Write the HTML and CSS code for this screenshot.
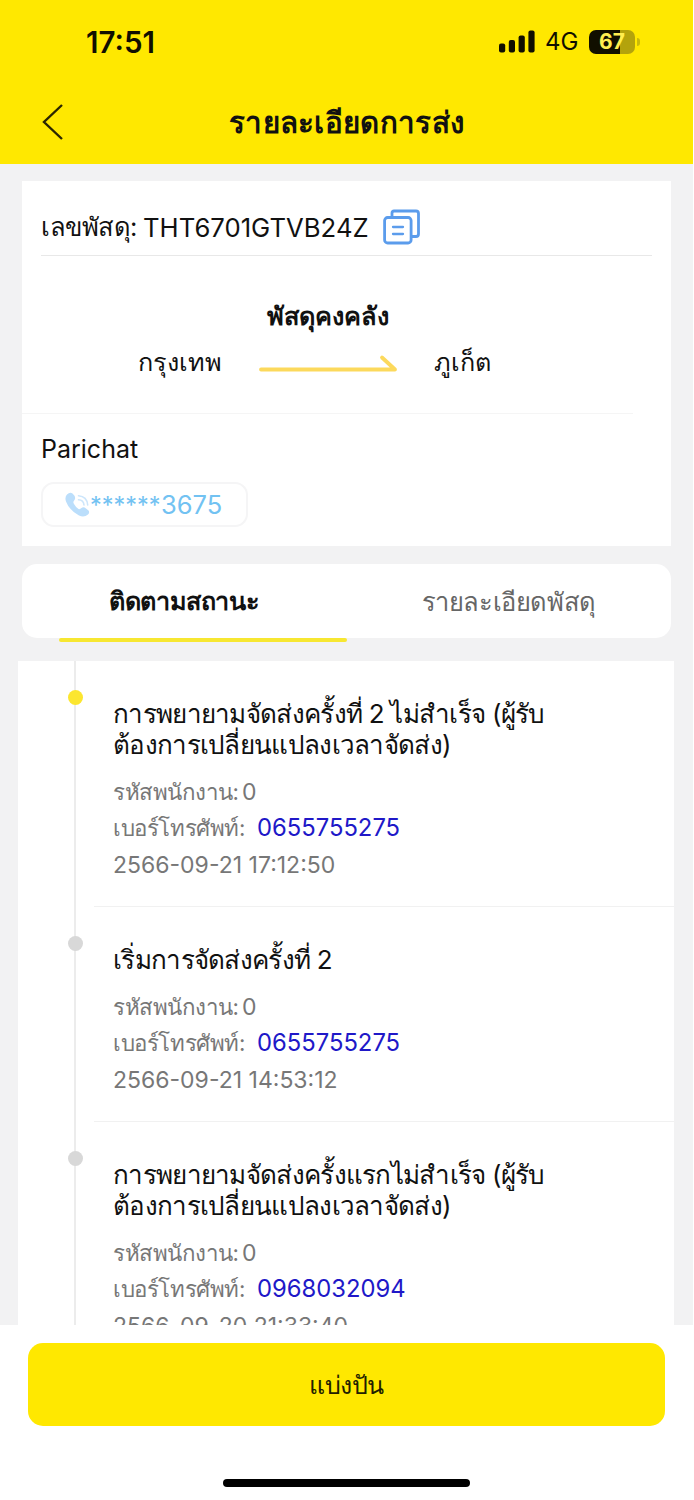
FILE: index.html
```
<!DOCTYPE html>
<html lang="th">
<head>
    <meta charset="UTF-8">
    <meta name="viewport" content="width=device-width, initial-scale=1.0">
    <title>รายละเอียดการส่ง</title>
    <link rel="stylesheet" href="styles.css">
</head>
<body>

<div class="page">
    <header class="header">
        <div class="status-bar">
            <span class="time">17:51</span>
            <svg class="signal" width="36" height="23" viewBox="0 0 36 23">
                <rect x="0" y="13.5" width="6.2" height="9" rx="2"/>
                <rect x="9.8" y="10" width="6.2" height="12.5" rx="2"/>
                <rect x="19.6" y="5.5" width="6.2" height="17" rx="2"/>
                <rect x="29.4" y="0.5" width="6.2" height="22" rx="2"/>
            </svg>
            <span class="network">4G</span>
            <div class="battery"><span class="battery-text">67</span></div>
            <span class="battery-cap"></span>
        </div>
        <div class="nav">
            <svg class="back" width="22" height="38" viewBox="0 0 22 38">
                <path d="M20 2 L2 19 L20 36" fill="none" stroke="#2b2600" stroke-width="2.4"/>
            </svg>
            <h1>รายละเอียดการส่ง</h1>
        </div>
    </header>

    <main class="content">
        <section class="card">
            <div class="parcel-row">
                <span class="parcel-label">เลขพัสดุ:</span>
                <span class="parcel-no">THT6701GTVB24Z</span>
                <svg class="copy" width="37" height="36" viewBox="0 0 37 36" fill="none" stroke="#5b9cec" stroke-width="2.8" stroke-linecap="round" stroke-linejoin="round">
                    <path d="M9 8 V4 Q9 2 11 2 H33 Q35.5 2 35.5 4.5 V25 Q35.5 27.5 33 27.5 H29"/>
                    <rect x="1.6" y="8.5" width="26.5" height="25.5" rx="3"/>
                    <path d="M10 18 H20 M10 25 H20" stroke-width="2.3"/>
                </svg>
            </div>
            <div class="route">
                <div class="route-status">พัสดุคงคลัง</div>
                <div class="route-line">
                    <span class="from">กรุงเทพ</span>
                    <svg class="arrow" width="140" height="20" viewBox="0 0 140 20">
                        <path d="M3 15.5 H137 L124 3.5" fill="none" stroke="#fcd95c" stroke-width="3.8" stroke-linecap="round" stroke-linejoin="round"/>
                    </svg>
                    <span class="to">ภูเก็ต</span>
                </div>
            </div>
            <div class="receiver">
                <div class="receiver-name">Parichat</div>
                <a class="phone">
                    <svg width="25" height="25" viewBox="0 0 25 25">
                        <path d="M2 2.5 Q5 -0.5 7.5 1.5 Q11.5 5 9.5 8 Q7.5 10 9 12 Q11 15.5 13.5 17 Q15 17.5 16.5 16 Q18.5 14.5 21 16.5 L23.5 18.5 Q25 20.5 23 22.5 Q19 26 14 23.5 Q4 18 1 9.5 Q-0.5 5 2 2.5 Z" fill="#bbdefb"/>
                        <path d="M13.5 3.8 Q22 4.5 22.7 13 M13.5 7.8 Q18.5 8 19 13" fill="none" stroke="#cde6fb" stroke-width="1.6" stroke-linecap="round"/>
                    </svg>
                    <span class="stars">******</span><span class="digits">3675</span>
                </a>
            </div>
        </section>

        <div class="tabs">
            <div class="tab active">ติดตามสถานะ</div>
            <div class="tab">รายละเอียดพัสดุ</div>
        </div>

        <section class="timeline">
            <div class="item current">
                <div class="title">การพยายามจัดส่งครั้งที่ 2 ไม่สำเร็จ (ผู้รับ<br>ต้องการเปลี่ยนแปลงเวลาจัดส่ง)</div>
                <div class="meta"><span class="staff">รหัสพนักงาน:</span> 0</div>
                <div class="meta"><span class="tel-label">เบอร์โทรศัพท์:</span><a class="tel">0655755275</a></div>
                <div class="meta date">2566-09-21 17:12:50</div>
            </div>
            <div class="item">
                <div class="title">เริ่มการจัดส่งครั้งที่ 2</div>
                <div class="meta"><span class="staff">รหัสพนักงาน:</span> 0</div>
                <div class="meta"><span class="tel-label">เบอร์โทรศัพท์:</span><a class="tel">0655755275</a></div>
                <div class="meta date">2566-09-21 14:53:12</div>
            </div>
            <div class="item">
                <div class="title">การพยายามจัดส่งครั้งแรกไม่สำเร็จ (ผู้รับ<br>ต้องการเปลี่ยนแปลงเวลาจัดส่ง)</div>
                <div class="meta"><span class="staff">รหัสพนักงาน:</span> 0</div>
                <div class="meta"><span class="tel-label">เบอร์โทรศัพท์:</span><a class="tel">0968032094</a></div>
                <div class="meta date">2566-09-20 21:33:40</div>
            </div>
        </section>
    </main>

    <footer class="footer">
        <button class="share">แบ่งปัน</button>
        <div class="home-bar"></div>
    </footer>
</div>

</body>
</html>
```
FILE: styles.css
```
* {
    box-sizing: border-box;
}
body {
    margin: 0;
    background: #fff;
    font-family: Inter, sans-serif;
    font-size: 26px;
    color: #111;
    white-space: nowrap;
}
.page {
    display: flex;
    flex-direction: column;
    width: 693px;
    height: 1500px;
    overflow: hidden;
}
.header {
    height: 164px;
    background: #ffe800;
    flex-shrink: 0;
}
.status-bar {
    display: flex;
    align-items: center;
    height: 83px;
    padding-left: 86px;
    color: #110f00;
}
.time {
    width: 413px;
    font-size: 29.5px;
    font-weight: 600;
}
.signal {
    fill: #110f00;
}
.network {
    width: 44px;
    margin-left: 10px;
    font-size: 24px;
}
.battery {
    width: 46px;
    height: 24px;
    border-radius: 7px;
    background: linear-gradient(to right, #110f00 67%, #b3a30c 67%);
    color: #ffee50;
    font-size: 21px;
    font-weight: 700;
    line-height: 24px;
    text-align: center;
}
.battery-cap {
    width: 3px;
    height: 8px;
    margin-left: 2px;
    border-radius: 0 4px 4px 0;
    background: #c9b90a;
}
.nav {
    display: flex;
    align-items: center;
    height: 78px;
    padding-left: 42px;
}
.nav h1 {
    margin: 0 0 0 165px;
    font-size: 29.5px;
    font-weight: 600;
    letter-spacing: 0.3px;
}
.content {
    height: 1161px;
    flex-shrink: 0;
    padding: 17px 19px 0 18px;
    background: #f2f2f3;
    overflow: hidden;
}
.card {
    height: 365px;
    margin: 0 3px 0 4px;
    background: #fff;
}
.parcel-row {
    display: flex;
    align-items: center;
    height: 75px;
    margin: 0 19px;
    padding-top: 18px;
    border-bottom: 1px solid #e8e8e8;
}
.parcel-label {
    width: 102px;
    font-size: 25.5px;
    letter-spacing: -0.5px;
}
.parcel-no {
    width: 240px;
    font-size: 25.7px;
}
.route {
    height: 158px;
    margin-right: 38px;
    padding-top: 40px;
    border-bottom: 1px solid #f5f5f5;
}
.route-status {
    height: 40px;
    line-height: 40px;
    font-size: 25.3px;
    font-weight: 700;
    text-align: center;
}
.route-line {
    display: flex;
    align-items: center;
    height: 52px;
    padding-left: 116px;
    font-size: 25.2px;
}
.from {
    width: 120px;
}
.arrow {
    margin-top: 3px;
}
.to {
    margin-left: 36px;
}
.receiver {
    padding: 15px 19px 0;
}
.receiver-name {
    height: 40px;
    line-height: 40px;
    font-size: 25px;
}
.phone {
    display: flex;
    align-items: center;
    width: 207px;
    height: 45px;
    margin-top: 13px;
    padding-left: 22px;
    border: 2px solid #f5f5f6;
    border-radius: 13px;
    color: #72c2f2;
}
.stars {
    width: 71px;
    font-size: 23.5px;
}
.digits {
    font-size: 25.5px;
}
.tabs {
    display: flex;
    height: 74px;
    margin: 18px 3px 23px 4px;
    border-radius: 15px;
    background: #fff;
}
.tab {
    position: relative;
    width: 50%;
    line-height: 75px;
    text-align: center;
    font-size: 25.5px;
    letter-spacing: -0.4px;
    color: #666;
}
.tab.active {
    font-size: 25.2px;
    font-weight: 700;
    color: #111;
}
.tab.active::after {
    content: "";
    position: absolute;
    left: 37px;
    bottom: -4px;
    width: 288px;
    height: 4px;
    border-radius: 2px;
    background: #f7e731;
}
.timeline {
    background: #fff;
}
.item {
    position: relative;
    margin-left: 56px;
    padding: 37px 0 24px 37px;
    border-left: 2px solid #ececec;
}
.item::before {
    content: "";
    position: absolute;
    left: -8px;
    top: 29px;
    width: 15px;
    height: 15px;
    border-radius: 50%;
    background: #d8d8d8;
}
.item.current::before {
    background: #fce62f;
}
.item::after {
    content: "";
    position: absolute;
    left: 18px;
    right: 0;
    bottom: 0;
    height: 1px;
    background: #f1f1f1;
}
.title {
    margin-bottom: 14px;
    font-size: 26px;
    line-height: 31px;
    letter-spacing: -0.7px;
}
.meta {
    display: flex;
    height: 36px;
    line-height: 36px;
    font-size: 23px;
    color: #777;
}
.staff {
    width: 129px;
    font-size: 22.3px;
    letter-spacing: -0.5px;
}
.tel-label {
    width: 144px;
    font-size: 22.3px;
    letter-spacing: -0.4px;
}
.tel {
    font-size: 23.8px;
    color: #2018c8;
}
.date {
    padding-top: 1px;
    height: 37px;
}
.footer {
    display: flex;
    flex-direction: column;
    align-items: center;
    height: 175px;
    padding-top: 18px;
    background: #fff;
}
.share {
    width: 637px;
    height: 83px;
    border: 0;
    border-radius: 15px;
    background: #ffe800;
    font: inherit;
    font-size: 25px;
    letter-spacing: -0.4px;
    color: #221e00;
}
.home-bar {
    width: 247px;
    height: 8px;
    margin-top: 53px;
    border-radius: 4px;
    background: #000;
}
```
